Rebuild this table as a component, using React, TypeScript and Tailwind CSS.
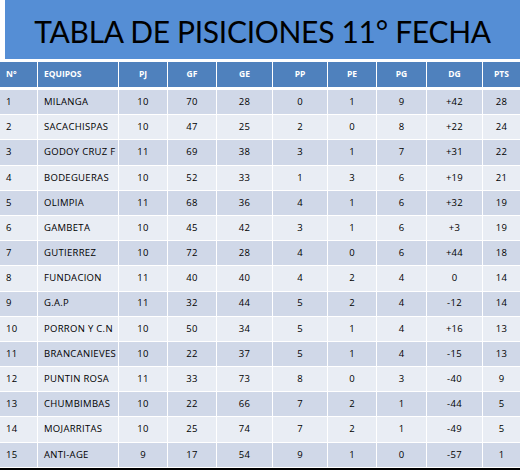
const cols = ["N°", "EQUIPOS", "PJ", "GF", "GE", "PP", "PE", "PG", "DG", "PTS"];

const rows: (string | number)[][] = [
  [1, "MILANGA", 10, 70, 28, 0, 1, 9, "+42", 28],
  [2, "SACACHISPAS", 10, 47, 25, 2, 0, 8, "+22", 24],
  [3, "GODOY CRUZ F", 11, 69, 38, 3, 1, 7, "+31", 22],
  [4, "BODEGUERAS", 10, 52, 33, 1, 3, 6, "+19", 21],
  [5, "OLIMPIA", 11, 68, 36, 4, 1, 6, "+32", 19],
  [6, "GAMBETA", 10, 45, 42, 3, 1, 6, "+3", 19],
  [7, "GUTIERREZ", 10, 72, 28, 4, 0, 6, "+44", 18],
  [8, "FUNDACION", 11, 40, 40, 4, 2, 4, "0", 14],
  [9, "G.A.P", 11, 32, 44, 5, 2, 4, "-12", 14],
  [10, "PORRON Y C.N", 10, 50, 34, 5, 1, 4, "+16", 13],
  [11, "BRANCANIEVES", 10, 22, 37, 5, 1, 4, "-15", 13],
  [12, "PUNTIN ROSA", 11, 33, 73, 8, 0, 3, "-40", 9],
  [13, "CHUMBIMBAS", 10, 22, 66, 7, 2, 1, "-44", 5],
  [14, "MOJARRITAS", 10, 25, 74, 7, 2, 1, "-49", 5],
  [15, "ANTI-AGE", 9, 17, 54, 9, 1, 0, "-57", 1],
];

const grid =
  "grid grid-cols-[37px_80px_48px_48px_55px_54px_48px_49px_55px_37px] gap-x-px";

function cellAlign(i: number) {
  return i < 2 ? "justify-start pl-[6px]" : "justify-center";
}

export default function App() {
  return (
    <div className="h-[474px] w-[520px] overflow-hidden bg-white font-['Open_Sans',sans-serif]">
      <div className="ml-[5px] flex h-[59px] items-center justify-center bg-[#558ed5] pt-[3px]">
        <h1 className="whitespace-nowrap font-['Lato',sans-serif] text-[30px] leading-none tracking-[-0.3px] text-black">
          TABLA DE PISICIONES 11° FECHA
        </h1>
      </div>

      <div className="mt-[3px] flex flex-col gap-y-px">
        <div className={`${grid} h-[25px]`}>
          {cols.map((c, i) => (
            <div
              key={c}
              className={`flex items-center bg-[#4f81bd] text-[8.5px] font-bold text-white ${cellAlign(i)}`}
            >
              {c}
            </div>
          ))}
        </div>
        <div className="h-px" />
        {rows.map((r, ri) => (
          <div key={ri} className={`${grid} h-[24.2px]`}>
            {r.map((v, i) => (
              <div
                key={i}
                className={`flex items-center text-[9.5px] tracking-[0.3px] text-black ${
                  ri % 2 === 0 ? "bg-[#d0d8e8]" : "bg-[#e9edf4]"
                } ${cellAlign(i)}`}
              >
                {v}
              </div>
            ))}
          </div>
        ))}
      </div>
      <div className="mt-[1px] h-[2px] bg-black" />
    </div>
  );
}
